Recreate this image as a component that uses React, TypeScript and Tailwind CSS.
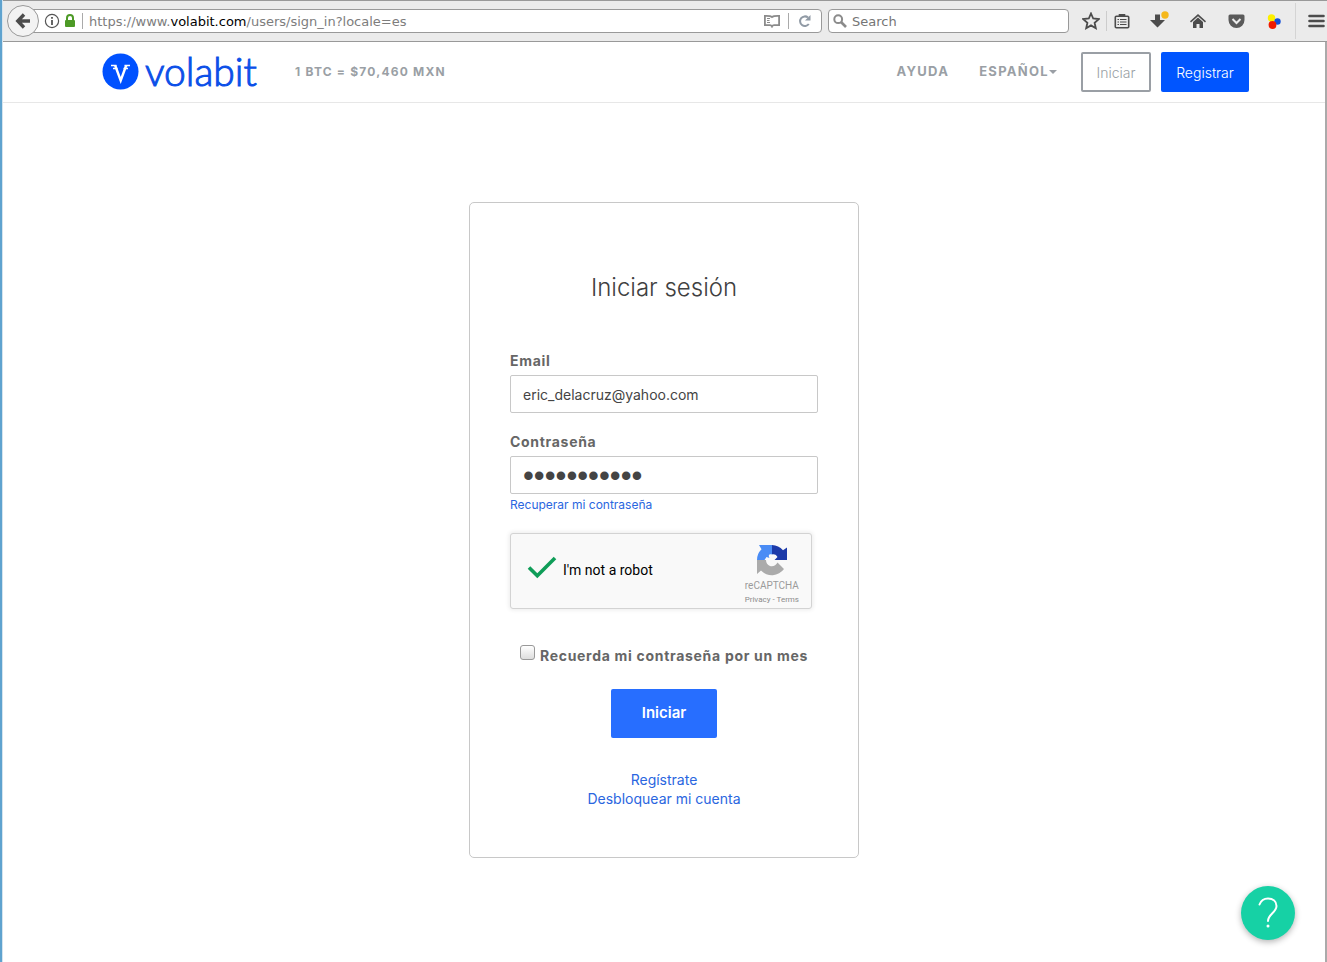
import type { ReactNode } from 'react';

function BrowserButton({ label, children }: { label: string; children: ReactNode }) {
  return (
    <button type="button" aria-label={label} className="flex h-8 w-[38px] items-center justify-center text-[#4c4c4c]">
      {children}
    </button>
  );
}

function BrowserBar() {
  return (
    <div className="flex h-[42px] items-center border-t border-b border-[#999] bg-[#ebebeb] pr-[2px] pl-1 font-['DejaVu_Sans',sans-serif] text-[13px]">
      <button
        type="button"
        aria-label="Back"
        className="z-10 -mr-4 flex size-8 shrink-0 items-center justify-center rounded-full border border-[#999] bg-[#f3f3f3] text-[#4c4c4c]"
      >
        <svg width="16" height="16" viewBox="0 0 16 16" fill="none" stroke="currentColor" strokeWidth="3.4">
          <path d="M9 1.5 2.8 8 9 14.5M3 8h12" />
        </svg>
      </button>

      <div className="flex h-6 min-w-0 flex-1 items-center rounded-sm border border-[#999] bg-white pr-2 pl-5">
        <svg width="16" height="16" viewBox="0 0 16 16" className="shrink-0" fill="none" stroke="#555" strokeWidth="1.2">
          <circle cx="8" cy="8" r="6.6" />
          <path d="M8 7v5M8 4v1.8" strokeWidth="1.8" />
        </svg>
        <svg width="12" height="14" viewBox="0 0 12 14" className="ml-1 shrink-0">
          <path d="M3 6V4a3 3 0 0 1 6 0v2" fill="none" stroke="#4d9a26" strokeWidth="2" />
          <rect x="1" y="6" width="10" height="7" rx="1" fill="#4d9a26" />
        </svg>
        <span className="ml-[6px] h-4 w-px shrink-0 bg-[#aaa]" />
        <span className="ml-[6px] flex-1 truncate pt-px text-[#7d7d7d]">
          https://www.<span className="text-black">volabit.com</span>/users/sign_in?locale=es
        </span>
        <button type="button" aria-label="Reader view" className="shrink-0">
          <svg width="16" height="14" viewBox="0 0 16 14" fill="none" stroke="#8b8b8b" strokeWidth="1.8">
            <path d="M8 3C6.5 1.6 4 1.8.9 1.8v9.4H6c1 0 1.6.4 2 1.3.4-.9 1-1.3 2-1.3h5.100V1.8C12 1.8 9.5 1.6 8 3Z" />
            <path d="M3 4.5h3M3 6.5h2.5M3 8.5h3" strokeWidth="1" />
          </svg>
        </button>
        <span className="mx-2 h-4 w-px shrink-0 bg-[#aaa]" />
        <button type="button" aria-label="Reload" className="shrink-0">
          <svg width="16" height="16" viewBox="0 0 16 16" fill="none" stroke="#909aa5" strokeWidth="2">
            <path d="M11.8 11A4.8 4.8 0 1 1 11 4.5" />
            <path d="M13.5 2v5.5H8Z" fill="#909aa5" stroke="none" />
          </svg>
        </button>
      </div>

      <label className="ml-[6px] flex h-6 w-[241px] shrink-0 items-center rounded-sm border border-[#999] bg-white pl-1">
        <svg width="14" height="14" viewBox="0 0 14 14" fill="none" stroke="#8b8b8b">
          <circle cx="5.2" cy="5.2" r="3.9" strokeWidth="2" />
          <path d="m8 8 5 5" strokeWidth="2.6" />
        </svg>
        <input
          type="text"
          aria-label="Search"
          placeholder="Search"
          className="ml-[5px] min-w-0 flex-1 bg-transparent pt-px outline-none placeholder:text-[#757575]"
        />
      </label>

      <div className="ml-1 flex shrink-0 items-center">
        <button type="button" aria-label="Bookmark" className="flex h-5 w-[34px] items-center justify-center border-r border-[#ccc] pl-[2px]">
          <svg width="18" height="18" viewBox="0 0 18 18" fill="none" stroke="#4c4c4c" strokeWidth="1.8">
            <path d="m9 1.5 2.2 5 5.5.6-4.1 3.7 1.2 5.400L9 13.4l-4.8 2.8 1.2-5.400-4.100-3.700 5.500-.600Z" />
          </svg>
        </button>
        <button type="button" aria-label="Show bookmarks" className="flex h-8 w-[30px] items-center justify-center">
          <svg width="16" height="16" viewBox="0 0 16 16" fill="none" stroke="#4c4c4c" strokeWidth="1.6">
            <rect x="1.3" y="3.300" width="13.400" height="11.400" rx="1" />
            <path d="M5.5 3V1.8h5V3" fill="#4c4c4c" />
            <path d="M3.500 6.500H5M6 6.500h6.500M3.500 9H5M6 9h6.500M3.500 11.500H5M6 11.500h6.500" strokeWidth="1.200" />
          </svg>
        </button>
        <button type="button" aria-label="Downloads" className="flex h-8 w-[42px] items-center justify-center">
          <svg width="22" height="20" viewBox="0 0 22 20">
            <path d="M8 3.500h5V9h5l-7.500 7.500L3 9h5Z" fill="#4c4c4c" />
            <circle cx="18" cy="4" r="3.700" fill="#f5b81c" />
          </svg>
        </button>
        <BrowserButton label="Home">
          <svg width="16" height="16" viewBox="0 0 16 16" fill="#4c4c4c">
            <path d="m8 1 8 7.300-1 1.200L8 3.200 1 9.500 0 8.300Z" />
            <path d="m8 4.600 5 4.500V15H9.500v-4h-3v4H3V9.100Z" />
          </svg>
        </BrowserButton>
        <BrowserButton label="Pocket">
          <svg width="17" height="16" viewBox="0 0 17 16">
            <path d="M2 1.500h13A1.500 1.500 0 0 1 16.500 3v4a8 8 0 0 1-16 0V3A1.500 1.500 0 0 1 2 1.500Z" fill="#5a5a5a" />
            <path d="m4.500 6 4 4 4-4" fill="none" stroke="#ebebeb" strokeWidth="2" />
          </svg>
        </BrowserButton>
        <BrowserButton label="Add-on">
          <svg width="16" height="16" viewBox="0 0 16 16">
            <circle cx="5.500" cy="5" r="3.700" fill="#fdf000" />
            <circle cx="11.500" cy="8.500" r="3.200" fill="#1450d8" />
            <circle cx="6.500" cy="12" r="3.900" fill="#f01a00" />
          </svg>
        </BrowserButton>
        <button type="button" aria-label="Open menu" className="ml-[2px] flex h-9 w-[30px] items-center justify-end border-l border-[#d4d4d4]">
          <svg width="17" height="14" viewBox="0 0 17 14" stroke="#4c4c4c" strokeWidth="2.600" strokeLinecap="round">
            <path d="M1.500 2h14M1.500 7h14M1.500 12h14" />
          </svg>
        </button>
      </div>
    </div>
  );
}

function Logo() {
  return (
    <a href="#" className="flex w-[156px] items-center gap-[6px] pb-[2px] text-[#0b4fe8]">
      <svg width="37" height="37" viewBox="0 0 37 37" className="shrink-0" aria-hidden="true">
        <circle cx="18.500" cy="18.500" r="18" fill="#0051ff" />
        <path d="M9 12.500h5.500M11 15.500h4.500M22.500 12.500H28M21.500 15.500H26" fill="none" stroke="#fff" strokeWidth="1.500" />
        <path d="m13.200 12.500 5.500 15 5.500-15" fill="none" stroke="#fff" strokeWidth="2.400" />
      </svg>
      <span className="font-[Lato,sans-serif] text-[39px] leading-9 font-light [-webkit-text-stroke:1px]">volabit</span>
    </a>
  );
}

function SiteHeader() {
  return (
    <header className="border-b border-[#e7e7e7]">
      <div className="mx-auto flex h-[60px] max-w-[1170px] items-center pl-[23px]">
        <Logo />
        <span className="ml-[37px] text-[12px] font-bold tracking-widest text-[#9a9fa5]">1 BTC = $70,460 MXN</span>
        <nav className="ml-auto flex items-center text-[13px] font-bold tracking-widest text-[#9a9fa5]">
          <a href="#">AYUDA</a>
          <a href="#" className="ml-[30px] flex items-center">
            ESPAÑOL
            <span className="border-x-4 border-t-4 border-x-transparent border-t-[#9a9fa5]" />
          </a>
        </nav>
        <a
          href="#"
          className="ml-6 flex h-10 w-[70px] items-center justify-center rounded-[2px] border-2 border-[#9a9fa5] text-[14px] font-light text-[#9a9fa5]"
        >
          Iniciar
        </a>
        <a href="#" className="ml-[10px] flex h-10 w-[88px] items-center justify-center rounded-[2px] bg-[#0055ff] text-[14px] font-light text-white">
          Registrar
        </a>
      </div>
    </header>
  );
}

function Captcha() {
  return (
    <div className="mt-[18px] flex h-[76px] w-[302px] items-center rounded-[3px] border border-[#d3d3d3] bg-[#f9f9f9] pr-3 pb-[2px] pl-4 font-[Roboto,sans-serif] shadow-[0_0_4px_1px_rgba(0,0,0,0.08)]">
      <svg width="30" height="24" viewBox="0 0 30 24" className="mb-[6px]" fill="none" stroke="#0f9d58" strokeWidth="3.600">
        <path d="M2 12.500 10.300 20.800 28 3" />
      </svg>
      <span className="ml-[6px] text-[14px] text-black">I'm not a robot</span>
      <div className="ml-auto flex flex-col items-center pt-2">
        <svg width="32" height="32" viewBox="0 0 32 32" aria-hidden="true">
          <path d="M1 16A15 15 0 0 1 5.500 5.300L3 1H16v9.500c-3-1-4 1-2.500 3.500l-3-1-2 3Z" fill="#4a8cf5" />
          <path d="M16 1a15 15 0 0 1 11 5.200L31 3.500V16H18.500l3-3c-1.500-2.500-3.500-3-5.500-2.500Z" fill="#1c3aa9" />
          <path d="M1 16h9c0 3 1.500 5 4 6 3 1 6-.500 7.500-3.500l6.500 6.500A15 15 0 0 1 5 26.500L1 30Z" fill="#ababab" />
        </svg>
        <span className="text-[10px] leading-5 text-[#9b9b9b]">reCAPTCHA</span>
        <span className="text-[8px] leading-2 text-[#8c8c8c]">
          <a href="#">Privacy</a> - <a href="#">Terms</a>
        </span>
      </div>
    </div>
  );
}

function SignInForm() {
  return (
    <form className="mx-auto mt-[99px] w-[390px] rounded-[5px] border border-[#c8c8c8] px-10 pt-[69px] pb-[49px]">
      <h1 className="text-center text-[24px] leading-8 font-light text-[#404040]">Iniciar sesión</h1>

      <label htmlFor="email" className="mt-[47px] block text-[14px] leading-5 font-bold tracking-wider text-[#666]">
        Email
      </label>
      <input
        id="email"
        type="email"
        defaultValue="eric_delacruz@yahoo.com"
        className="mt-1 block h-[38px] w-full rounded-[2px] border border-[#c8c8c8] px-3 text-[14px] text-[#444] outline-none"
      />

      <label htmlFor="password" className="mt-[19px] block text-[14px] leading-5 font-bold tracking-wider text-[#666]">
        Contraseña
      </label>
      <input
        id="password"
        type="password"
        defaultValue="contrasena1"
        className="mt-1 block h-[38px] w-full rounded-[2px] border border-[#c8c8c8] px-3 pt-[2px] font-['Liberation_Sans',sans-serif] text-[31px] text-[#444] outline-none"
      />
      <a href="#" className="mt-px block text-[12px] leading-5 text-[#2a66e0]">
        Recuperar mi contraseña
      </a>

      <Captcha />

      <div className="mt-9 flex items-start justify-center">
        <input
          id="remember"
          type="checkbox"
          className="size-[15px] shrink-0 appearance-none rounded-[3px] border border-[#999] bg-linear-to-b from-white to-[#ddd]"
        />
        <label htmlFor="remember" className="ml-[5px] pt-px text-[14px] leading-5 font-bold tracking-wider text-[#666]">
          Recuerda mi contraseña por un mes
        </label>
      </div>

      <button type="submit" className="mx-auto mt-[23px] block h-[49px] w-[106px] rounded-[2px] bg-[#276eff] text-[15px] font-semibold text-white">
        Iniciar
      </button>

      <div className="mt-8 flex flex-col items-center text-[14px] leading-[19px] text-[#2a66e0]">
        <a href="#">Regístrate</a>
        <a href="#">Desbloquear mi cuenta</a>
      </div>
    </form>
  );
}

export default function App() {
  return (
    <div className="min-h-screen border-l-2 border-[#5fa3cf] bg-white font-[Inter,sans-serif]">
      <div className="flex min-h-screen flex-col border-l border-[#d5e4ee]">
        <BrowserBar />
        <div className="flex-1 border-r-2 border-[#aaa]">
          <SiteHeader />
          <main>
            <SignInForm />
          </main>
        </div>
      </div>
      <button
        type="button"
        aria-label="Ayuda"
        className="fixed right-8 bottom-[22px] flex size-[54px] items-center justify-center rounded-full bg-[#16d1a5] shadow-[0_2px_6px_rgba(0,0,0,0.3)]"
      >
        <svg width="24" height="34" viewBox="0 0 24 34" fill="none" stroke="#fff" strokeWidth="2" strokeLinecap="round">
          <path d="M3.500 8.500C5 4.500 8.500 2.500 12 2.500c5 0 8.500 3 8.500 7.500 0 6.500-8.500 8-8.500 15" />
          <circle cx="12" cy="30" r="1.500" fill="#fff" stroke="none" />
        </svg>
      </button>
    </div>
  );
}
